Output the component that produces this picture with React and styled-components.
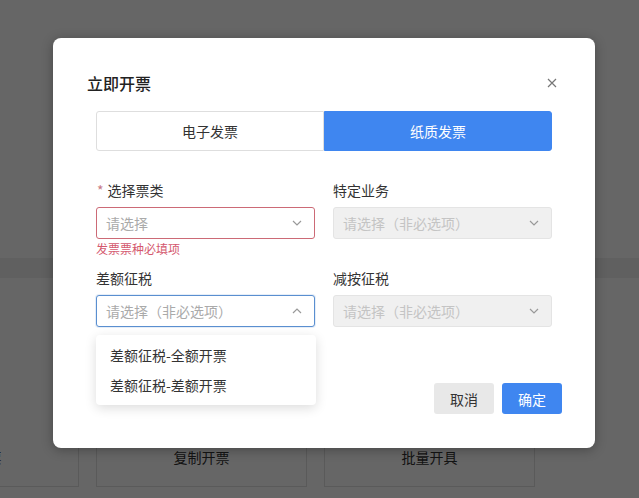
import React from "react";
import styled, { createGlobalStyle } from "styled-components";

const Global = createGlobalStyle`
  html, body { margin: 0; padding: 0; }
  body {
    font-family: "Noto Sans CJK SC", "Noto Sans", sans-serif;
    overflow: hidden;
  }
  * { box-sizing: border-box; }
`;

const Page = styled.div`
  position: relative;
  width: 639px;
  height: 498px;
  background: #fff;
  display: flex;
  flex-direction: column;
  overflow: hidden;
`;

const Band = styled.div`
  margin-top: 258px;
  height: 20px;
  background: #f1f1f1;
`;

const CellRow = styled.div`
  margin-top: 149px;
  margin-left: -132px;
  display: flex;
  gap: 17px;
`;

const Cell = styled.div`
  flex: 0 0 211px;
  height: 60px;
  border: 1px solid #e2e2e2;
  border-top: none;
  display: flex;
  align-items: center;
  justify-content: center;
  font-size: 14px;
  color: #333;
`;

const Overlay = styled.div`
  position: absolute;
  inset: 0;
  background: rgba(0, 0, 0, 0.6);
`;

const Dialog = styled.div`
  position: absolute;
  left: 53px;
  top: 38px;
  width: 542px;
  height: 410px;
  background: #fff;
  border-radius: 8px;
  box-shadow: 0 2px 12px rgba(0, 0, 0, 0.3);
  display: flex;
  flex-direction: column;
  padding: 33px 33px 34px 34px;
`;

const Header = styled.div`
  display: flex;
  align-items: center;
  justify-content: space-between;
  height: 24px;
`;

const Title = styled.div`
  font-size: 16px;
  font-weight: 500;
  color: #222;
  line-height: 24px;
`;

const Close = styled.div`
  width: 14px;
  height: 14px;
  margin-right: 3px;
  display: flex;
  align-items: center;
  justify-content: center;
`;

const Tabs = styled.div`
  margin: 16px 10px 0 9px;
  display: flex;
  height: 40px;
`;

const Tab = styled.div`
  flex: 1;
  display: flex;
  align-items: center;
  justify-content: center;
  font-size: 14px;
  color: ${(p) => (p.$active ? "#fff" : "#333")};
  background: ${(p) => (p.$active ? "#3f86f0" : "#fff")};
  border: 1px solid ${(p) => (p.$active ? "#3f86f0" : "#dedede")};
  border-radius: ${(p) => (p.$active ? "0 3px 3px 0" : "3px 0 0 3px")};
`;

const FormGrid = styled.div`
  margin: 29px 10px 0 9px;
  display: grid;
  grid-template-columns: 219px 219px;
  column-gap: 18px;
  row-gap: 11px;
  align-items: start;
`;

const Field = styled.div`
  position: relative;
  display: flex;
  flex-direction: column;
`;

const Label = styled.div`
  font-size: 14px;
  line-height: 20px;
  color: #333;
  margin-bottom: 7px;
`;

const Star = styled.span`
  color: #c77a86;
  margin-right: 4px;
  margin-left: 1px;
`;

const Select = styled.div`
  height: 32px;
  border-radius: 3px;
  border: 1px solid
    ${(p) =>
      p.$state === "error"
        ? "#cc6a76"
        : p.$state === "focus"
        ? "#5a8fd0"
        : p.$state === "disabled"
        ? "#e4e4e4"
        : "#dcdcdc"};
  background: ${(p) => (p.$state === "disabled" ? "#f0f0f0" : "#fff")};
  box-shadow: ${(p) =>
    p.$state === "focus" ? "0 0 0 1px rgba(90,143,208,0.15)" : "none"};
  display: flex;
  align-items: center;
  justify-content: space-between;
  padding: 0 12px 0 9px;
`;

const Placeholder = styled.span`
  font-size: 14px;
  color: ${(p) => (p.$disabled ? "#c4c4c4" : "#aaa")};
`;

const ErrorText = styled.div`
  margin-top: 2px;
  font-size: 12px;
  line-height: 16px;
  color: #d4586e;
`;

const Dropdown = styled.div`
  position: absolute;
  top: calc(100% + 8px);
  left: 0;
  width: 220px;
  background: #fff;
  border-radius: 4px;
  box-shadow: 0 3px 12px rgba(0, 0, 0, 0.14);
  padding: 5px 0;
  z-index: 2;
`;

const Option = styled.div`
  height: 30px;
  line-height: 30px;
  padding: 0 14px;
  font-size: 14px;
  color: #333;
`;

const Footer = styled.div`
  margin-top: auto;
  display: flex;
  justify-content: flex-end;
  gap: 8px;
`;

const Button = styled.div`
  width: 60px;
  height: 31px;
  border-radius: 3px;
  display: flex;
  align-items: center;
  justify-content: center;
  font-size: 14px;
  color: ${(p) => (p.$primary ? "#fff" : "#333")};
  background: ${(p) => (p.$primary ? "#3f86f0" : "#e8e8e8")};
`;

const Chevron = ({ up }) => (
  <svg width="10" height="6" viewBox="0 0 10 6">
    <polyline
      points={up ? "1,5 5,1 9,5" : "1,1 5,5 9,1"}
      fill="none"
      stroke="#999"
      strokeWidth="1.2"
    />
  </svg>
);

export default function App() {
  return (
    <>
      <Global />
      <Page>
        <Band />
        <CellRow>
          <Cell>手工开票</Cell>
          <Cell>复制开票</Cell>
          <Cell>批量开具</Cell>
        </CellRow>
        <Overlay />
        <Dialog>
          <Header>
            <Title>立即开票</Title>
            <Close>
              <svg width="10" height="10" viewBox="0 0 10 10">
                <path d="M1 1 L9 9 M9 1 L1 9" stroke="#777" strokeWidth="1.2" />
              </svg>
            </Close>
          </Header>
          <Tabs>
            <Tab>电子发票</Tab>
            <Tab $active>纸质发票</Tab>
          </Tabs>
          <FormGrid>
            <Field>
              <Label>
                <Star>*</Star>选择票类
              </Label>
              <Select $state="error">
                <Placeholder>请选择</Placeholder>
                <Chevron />
              </Select>
              <ErrorText>发票票种必填项</ErrorText>
            </Field>
            <Field>
              <Label>特定业务</Label>
              <Select $state="disabled">
                <Placeholder $disabled>请选择（非必选项）</Placeholder>
                <Chevron />
              </Select>
            </Field>
            <Field>
              <Label>差额征税</Label>
              <Select $state="focus">
                <Placeholder>请选择（非必选项）</Placeholder>
                <Chevron up />
              </Select>
              <Dropdown>
                <Option>差额征税-全额开票</Option>
                <Option>差额征税-差额开票</Option>
              </Dropdown>
            </Field>
            <Field>
              <Label>减按征税</Label>
              <Select $state="disabled">
                <Placeholder $disabled>请选择（非必选项）</Placeholder>
                <Chevron />
              </Select>
            </Field>
          </FormGrid>
          <Footer>
            <Button>取消</Button>
            <Button $primary>确定</Button>
          </Footer>
        </Dialog>
      </Page>
    </>
  );
}
